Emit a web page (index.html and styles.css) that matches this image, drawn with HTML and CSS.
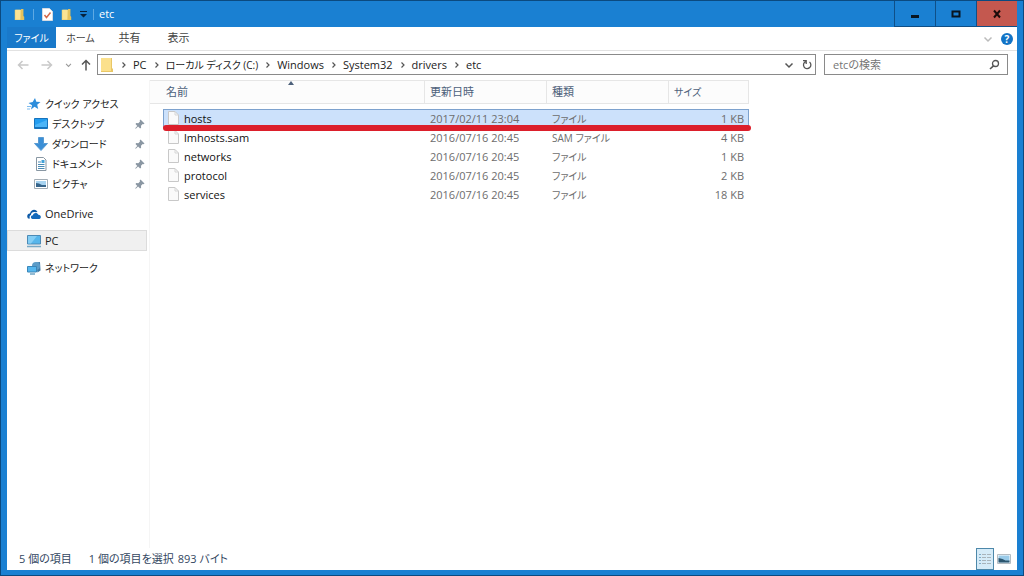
FILE: index.html
```html
<!doctype html>
<html lang="ja">
<head>
    <meta charset="UTF-8">
    <meta name="viewport" content="width=device-width, initial-scale=1">
    <title>etc</title>
    <link rel="stylesheet" href="styles.css">
</head>
<body>
    <!-- shared shapes -->
    <svg class="defs" aria-hidden="true">
        <symbol id="folder" viewBox="0 0 14 16">
            <path d="M1 2h8v13H1z" fill="#f2d67c"/>
            <path d="M9 1h3v9l1 1v4H8z" fill="#e6c25c"/>
            <path d="M2 2h6v12H2z" fill="#fbe394"/>
        </symbol>
        <symbol id="folder-large" viewBox="0 0 14 16">
            <path d="M1 1h11v10l1 1v3H1z" fill="#e9c766"/>
            <path d="M1 1h10v13H1z" fill="#fbe08c"/>
        </symbol>
        <symbol id="file" viewBox="0 0 11 14">
            <path d="M.5.5h6.500l3.500 3.500v9.500H.5z" fill="#fafafa" stroke="#c8c8c8"/>
            <path d="M7 .5v3.500h3.500" fill="none" stroke="#d6d6d6"/>
        </symbol>
        <symbol id="pin" viewBox="0 0 10 10">
            <path d="M5.500.5l4 4-1 .7-.8-.2-1.700 1.800.1 2-1 .8-2-2L.8 9.800l-.6-.6L2.300 7 .5 5l.8-.9 2 .1L5 2.400l-.3-1z" fill="#8b97a3"/>
        </symbol>
        <symbol id="chevron" viewBox="0 0 6 8">
            <path d="M1.500 1.500L4 4 1.500 6.500" fill="none" stroke="#555" stroke-width="1.200"/>
        </symbol>
        <symbol id="down" viewBox="0 0 10 8">
            <path d="M1.500 2.500L5 6l3.500-3.500" fill="none" stroke="currentColor" stroke-width="1.500"/>
        </symbol>
        <symbol id="arrow" viewBox="0 0 12 12">
            <path d="M11.500 6H1.500M5.500 2l-4 4 4 4" fill="none" stroke="currentColor" stroke-width="1.500"/>
        </symbol>
    </svg>

    <div class="window">
        <header class="titlebar">
            <svg class="title-icon"><use href="#folder"/></svg>
            <span class="divider"></span>
            <button class="quick" aria-label="プロパティ">
                <svg width="11" height="13" viewBox="0 0 11 13">
                    <path d="M.5.5h7l3 3v9H.5z" fill="#fff" stroke="#d5dbe2"/>
                    <path d="M2.500 7l2 2.500L8.500 4.500" fill="none" stroke="#d4694b" stroke-width="1.500"/>
                </svg>
            </button>
            <button class="quick" aria-label="新しいフォルダー"><svg class="title-icon"><use href="#folder"/></svg></button>
            <button class="quick" aria-label="カスタマイズ">
                <svg width="7" height="7" viewBox="0 0 7 7"><path d="M0 0h7v1H0zM0 3h7L3.500 6.500z" fill="#06233f"/></svg>
            </button>
            <span class="divider"></span>
            <h1>etc</h1>
            <div class="controls">
                <button aria-label="最小化"><svg width="10" height="10" viewBox="0 0 10 10"><path d="M1 6h8v3H1z" fill="#081420"/></svg></button>
                <button aria-label="最大化"><svg width="10" height="10" viewBox="0 0 10 10"><path d="M1.500 2.500h7v5h-7z" fill="none" stroke="#081420" stroke-width="2"/></svg></button>
                <button class="close" aria-label="閉じる"><svg width="10" height="10" viewBox="0 0 10 10"><path d="M2 1.500l6 7M8 1.500l-6 7" stroke="#1c0b0a" stroke-width="2"/></svg></button>
            </div>
        </header>

        <div class="ribbon">
            <button class="tab file-tab kana">ファイル</button>
            <button class="tab kana">ホーム</button>
            <button class="tab">共有</button>
            <button class="tab">表示</button>
            <button class="expand" aria-label="リボンの展開"><svg width="10" height="8"><use href="#down"/></svg></button>
            <button class="help" aria-label="ヘルプ">?</button>
        </div>

        <div class="toolbar">
            <div class="history">
                <button class="off" aria-label="戻る"><svg width="12" height="12"><use href="#arrow"/></svg></button>
                <button class="off" aria-label="進む"><svg class="forward" width="12" height="12"><use href="#arrow"/></svg></button>
                <button class="recent" aria-label="最近の場所"><svg width="7" height="6" viewBox="0 0 10 8"><use href="#down"/></svg></button>
                <button class="up" aria-label="上へ"><svg width="12" height="12"><use href="#arrow"/></svg></button>
            </div>
            <nav class="address" aria-label="アドレス">
                <svg class="address-icon"><use href="#folder-large"/></svg>
                <svg class="sep"><use href="#chevron"/></svg>
                <a href="#">PC</a>
                <svg class="sep"><use href="#chevron"/></svg>
                <a href="#" class="kana">ローカル ディスク (C:)</a>
                <svg class="sep"><use href="#chevron"/></svg>
                <a href="#">Windows</a>
                <svg class="sep"><use href="#chevron"/></svg>
                <a href="#">System32</a>
                <svg class="sep"><use href="#chevron"/></svg>
                <a href="#">drivers</a>
                <svg class="sep"><use href="#chevron"/></svg>
                <a href="#">etc</a>
                <div class="address-end">
                    <button aria-label="以前の場所"><svg width="10" height="8"><use href="#down"/></svg></button>
                    <button aria-label="更新">
                        <svg width="10" height="11" viewBox="0 0 10 11"><path d="M7.500 3A3.700 3.700 0 1 1 3.500 2.600M1 1.700h3.200v3.300" fill="none" stroke="#555" stroke-width="1.300"/></svg>
                    </button>
                </div>
            </nav>
            <div class="search">
                <input type="text" aria-label="検索" placeholder="etcの検索">
                <svg width="11" height="11" viewBox="0 0 11 11"><circle cx="6.500" cy="4.500" r="3" fill="none" stroke="#555" stroke-width="1.300"/><path d="M4.500 6.800L1 10" stroke="#555" stroke-width="1.600"/></svg>
            </div>
        </div>

        <main class="content">
            <nav class="sidebar" aria-label="ナビゲーション">
                <div class="group">
                    <a href="#" class="place kana">
                        <svg width="14" height="14" viewBox="0 0 14 14"><path d="M8 1l1.300 3.800 4.200.2-3.300 2.700 1 4.300-3.700-2.200L4 12.500l1-4.300L1.500 6l4.200-.9z" fill="#2d8ddb"/><path d="M0 9.500h4M0 12h3" stroke="#7fbcee"/></svg>
                        クイック アクセス
                    </a>
                    <a href="#" class="place sub kana">
                        <svg width="14" height="14" viewBox="0 0 14 14"><path d="M.5 1.500h13v10H.5z" fill="#239df0" stroke="#1673bd"/><path d="M1 8l12-5v8H1z" fill="#4bb4f7"/><path d="M1 10.500h12" stroke="#1673bd"/></svg>
                        デスクトップ
                        <svg class="pin"><use href="#pin"/></svg>
                    </a>
                    <a href="#" class="place sub kana">
                        <svg width="14" height="14" viewBox="0 0 14 14"><path d="M4.500.5h5v6h4L7 13.500.5 6.500h4z" fill="#3b8fd6" stroke="#5a9bd2"/></svg>
                        ダウンロード
                        <svg class="pin"><use href="#pin"/></svg>
                    </a>
                    <a href="#" class="place sub kana">
                        <svg width="14" height="14" viewBox="0 0 14 14"><path d="M2.500.5h7l2.500 2.500v10.500H2.500z" fill="#fff" stroke="#8997a3"/><path d="M4 5h3M4 7.500h6.500M4 9.500h6.500M4 11.500h6.500" stroke="#4b8bb5"/><path d="M7.500 3h3v3h-3z" fill="#42a2d8"/></svg>
                        ドキュメント
                        <svg class="pin"><use href="#pin"/></svg>
                    </a>
                    <a href="#" class="place sub kana">
                        <svg width="14" height="14" viewBox="0 0 14 14"><path d="M.5 2.500h13v9H.5z" fill="#fff" stroke="#a3adb5"/><path d="M2 4h10v6H2z" fill="#a7d3f0"/><path d="M2 6l3 .5L8 8h4v2H2z" fill="#36648a"/></svg>
                        ピクチャ
                        <svg class="pin"><use href="#pin"/></svg>
                    </a>
                </div>
                <a href="#" class="place">
                    <svg width="14" height="14" viewBox="0 0 14 14"><path d="M1 11.500C-.8 9 .8 6.300 3 6.500 4 2.500 8.500 1.500 10.500 5L8.500 5.200C6 4.200 3.800 6 4 8c-1.500.5-1.700 2-1 3.500z" fill="#0d5aa7"/><path d="M5.500 12c-2.300-.5-2-3.600.4-3.700.5-3 4.500-3.200 5.400-.6 2.700-.2 3.500 3.500 1.200 4.300z" fill="#1269bb"/></svg>
                    OneDrive
                </a>
                <a href="#" class="place current">
                    <svg width="14" height="14" viewBox="0 0 14 14"><path d="M.5 1.500h13v8.500H.5z" fill="#57b6eb" stroke="#4c8ab5"/><path d="M1 2h9L4 9.500H1z" fill="#84cef5"/><path d="M0 12.500h14" stroke="#79a9c6" stroke-width="1.500"/></svg>
                    PC
                </a>
                <a href="#" class="place kana">
                    <svg width="14" height="14" viewBox="0 0 14 14"><path d="M8.500 1.500l4.500-.5.500 8.500-3 2z" fill="#3b78a6"/><circle cx="9" cy="5" r="4" fill="#5d9cc7"/><path d="M.5 5.500h9V11h-9z" fill="#56b7ee" stroke="#3b86b8"/><path d="M3 13h5" stroke="#6fa4c5" stroke-width="1.500"/></svg>
                    ネットワーク
                </a>
            </nav>

            <section class="files">
                <table>
                    <colgroup>
                        <col class="col-name">
                        <col class="col-date">
                        <col class="col-type">
                        <col class="col-size">
                    </colgroup>
                    <thead>
                        <tr>
                            <th class="sorted">名前</th>
                            <th>更新日時</th>
                            <th>種類</th>
                            <th class="kana">サイズ</th>
                        </tr>
                    </thead>
                    <tbody>
                        <tr class="selected">
                            <td><svg class="file"><use href="#file"/></svg>hosts</td>
                            <td>2017/02/11 23:04</td>
                            <td class="kana">ファイル</td>
                            <td>1 KB</td>
                        </tr>
                        <tr>
                            <td><svg class="file"><use href="#file"/></svg>lmhosts.sam</td>
                            <td>2016/07/16 20:45</td>
                            <td class="kana">SAM ファイル</td>
                            <td>4 KB</td>
                        </tr>
                        <tr>
                            <td><svg class="file"><use href="#file"/></svg>networks</td>
                            <td>2016/07/16 20:45</td>
                            <td class="kana">ファイル</td>
                            <td>1 KB</td>
                        </tr>
                        <tr>
                            <td><svg class="file"><use href="#file"/></svg>protocol</td>
                            <td>2016/07/16 20:45</td>
                            <td class="kana">ファイル</td>
                            <td>2 KB</td>
                        </tr>
                        <tr>
                            <td><svg class="file"><use href="#file"/></svg>services</td>
                            <td>2016/07/16 20:45</td>
                            <td class="kana">ファイル</td>
                            <td>18 KB</td>
                        </tr>
                    </tbody>
                </table>
            </section>
        </main>

        <footer class="statusbar">
            <span class="count">5 個の項目</span>
            <span>1 個の項目を選択</span>
            <span class="bytes">893 バイト</span>
            <div class="views">
                <button class="active" aria-label="詳細">
                    <svg width="14" height="14" viewBox="0 0 14 14"><path d="M1 2.500h2M1 5.500h2M1 8.500h2M1 11.500h2" stroke="#7fabc6"/><path d="M4 2.500h4M9 2.500h4M4 5.500h4M9 5.500h4M4 8.500h4M9 8.500h4M4 11.500h4M9 11.500h4" stroke="#a9b4bb"/></svg>
                </button>
                <button aria-label="大アイコン">
                    <svg width="14" height="12" viewBox="0 0 14 12"><path d="M.5 1.500h13v9H.5z" fill="#fff" stroke="#b4bcc2"/><path d="M1.500 2.500h11v7h-11z" fill="#9acbe9"/><path d="M1.500 5l4 1 3 1.500h4v2h-11z" fill="#2c566f"/></svg>
                </button>
            </div>
        </footer>
    </div>
</body>
</html>
```

FILE: styles.css
```css
* {
    box-sizing: border-box;
}
body {
    margin: 0;
    font-family: "Open Sans", "Noto Sans CJK JP", sans-serif;
    font-size: 11px;
    line-height: 16px;
    font-feature-settings: "palt";
    color: #222;
}
button, input {
    font: inherit;
    font-feature-settings: inherit;
    color: inherit;
    padding: 0;
    border: 0;
    background: none;
}
button {
    display: flex;
    align-items: center;
    justify-content: center;
}
a {
    color: inherit;
    text-decoration: none;
}
svg {
    flex: none;
}
.defs {
    display: none;
}
.kana {
    font-size: 10px;
}

.window {
    display: flex;
    flex-direction: column;
    min-height: 100vh;
    padding: 0 6px 5px;
    border: 1px solid #0b4a80;
    background: #1a80d2;
}

/* title bar */
.titlebar {
    display: flex;
    align-items: center;
    height: 26px;
    padding-left: 7px;
    color: #fff;
}
.title-icon {
    width: 11px;
    height: 13px;
}
.titlebar .divider {
    width: 1px;
    height: 11px;
    margin: 0 8px;
    background: #5ea9e3;
}
.quick {
    margin-right: 8px;
}
.quick + .divider {
    margin: 0 5px 0 -2px;
}
h1 {
    margin: 0;
    font-size: 11px;
    font-weight: normal;
}
.controls {
    display: flex;
    align-self: stretch;
    margin-left: auto;
}
.controls button {
    width: 41px;
    border: solid #0f4f87;
    border-width: 0 0 1px 1px;
}
.controls .close {
    background: #c4584f;
}

/* ribbon tabs */
.ribbon {
    display: flex;
    align-items: center;
    height: 24px;
    border-bottom: 1px solid #e2e2e2;
    background: #fff;
}
.tab {
    width: 49px;
    height: 21px;
    align-self: flex-start;
    color: #444;
}
.file-tab {
    background: #1979ca;
    color: #fff;
}
.expand {
    margin-left: auto;
    color: #bbb;
}
.help {
    width: 12px;
    height: 12px;
    margin: 0 4px 0 8px;
    border-radius: 50%;
    background: #1273c6;
    color: #fff;
    font-size: 10px;
    font-weight: bold;
    line-height: 12px;
}

/* address row */
.toolbar {
    display: flex;
    gap: 8px;
    height: 29px;
    padding: 3px 9px 5px 0;
    background: #fff;
}
.history {
    display: flex;
    align-items: center;
    width: 82px;
    padding-left: 10px;
    gap: 12px;
    color: #555;
}
.history .off {
    color: #c8c8c8;
}
.history .forward {
    transform: rotate(180deg);
}
.history .recent {
    margin-right: -4px;
    color: #999;
}
.history .up svg {
    transform: rotate(90deg);
}
.address {
    display: flex;
    flex: 1;
    align-items: center;
    padding: 0 3px 0 2px;
    border: 1px solid #8a8a8a;
}
.address-icon {
    width: 14px;
    height: 16px;
}
.sep {
    width: 6px;
    height: 8px;
    margin: 0 6px 0 7px;
}
.address-end {
    display: flex;
    gap: 8px;
    margin-left: auto;
    color: #555;
}
.search {
    display: flex;
    align-items: center;
    width: 184px;
    padding: 0 7px 0 8px;
    border: 1px solid #8a8a8a;
}
.search input {
    flex: 1;
    min-width: 0;
    outline: 0;
}
.search input::placeholder {
    color: #757575;
}

/* navigation and file list */
.content {
    display: flex;
    flex: 1;
    background: #fff;
}
.sidebar {
    display: flex;
    flex-direction: column;
    gap: 6px;
    width: 143px;
    padding: 14px 2px 0 0;
    border-right: 1px solid #f5f5f5;
}
.group {
    margin-bottom: 3px;
}
.place {
    display: flex;
    align-items: center;
    gap: 4px;
    height: 21px;
    padding: 0 1px 0 19px;
    border: 1px solid transparent;
}
.group .place {
    height: 20px;
}
.group .sub {
    padding-left: 26px;
}
.place.current {
    border-color: #dcdcdc;
    background: #f0f0f0;
}
.pin {
    width: 10px;
    height: 10px;
    margin-left: auto;
}
.files {
    flex: 1;
    padding-left: 13px;
}
table {
    width: 586px;
    table-layout: fixed;
    border-collapse: separate;
    border-spacing: 0;
}
.col-name {
    width: 262px;
}
.col-date,
.col-type {
    width: 122px;
}
th {
    position: relative;
    height: 24px;
    padding: 0 5px;
    border: solid #e6e6e6;
    border-width: 1px 1px 1px 0;
    background: #fcfcfc;
    color: #4c607a;
    font-weight: normal;
    text-align: left;
}
th:first-child {
    padding-left: 3px;
}
/* carries the header strip out to the sidebar */
.sorted::before {
    content: "";
    position: absolute;
    top: -1px;
    right: 100%;
    bottom: -1px;
    width: 13px;
    border: solid #e6e6e6;
    border-width: 1px 0;
    background: #fcfcfc;
}
.sorted::after {
    content: "";
    position: absolute;
    top: 0;
    left: 48%;
    border: solid transparent;
    border-width: 0 3px 4px;
    border-bottom-color: #4c607a;
}
tbody::before {
    content: "";
    display: block;
    height: 5px;
}
td {
    height: 19px;
    padding: 0 5px;
    color: #6d6d6d;
    white-space: nowrap;
}
td:first-child {
    color: #111;
}
td:last-child {
    text-align: right;
}
.file {
    width: 11px;
    height: 14px;
    margin-right: 5px;
    vertical-align: -2px;
}
.selected {
    position: relative;
    background: #cce1fb;
    outline: 1px solid #7da2ce;
    outline-offset: -1px;
}
/* red marker under the row to edit */
.selected td:last-child::after {
    content: "";
    position: absolute;
    right: -2px;
    bottom: -3px;
    left: 0;
    height: 6px;
    border-radius: 3px;
    background: #dc1f2b;
}

/* status bar */
.statusbar {
    display: flex;
    align-items: center;
    height: 22px;
    padding: 0 4px 0 12px;
    background: #fff;
    color: #33475f;
}
.count {
    margin-right: 17px;
}
.bytes {
    margin-left: 4px;
}
.views {
    display: flex;
    align-self: stretch;
    gap: 1px;
    margin-left: auto;
}
.views button {
    width: 18px;
}
.views .active {
    border: 1px solid #4d88aa;
    background: #d5ebf8;
}
```
